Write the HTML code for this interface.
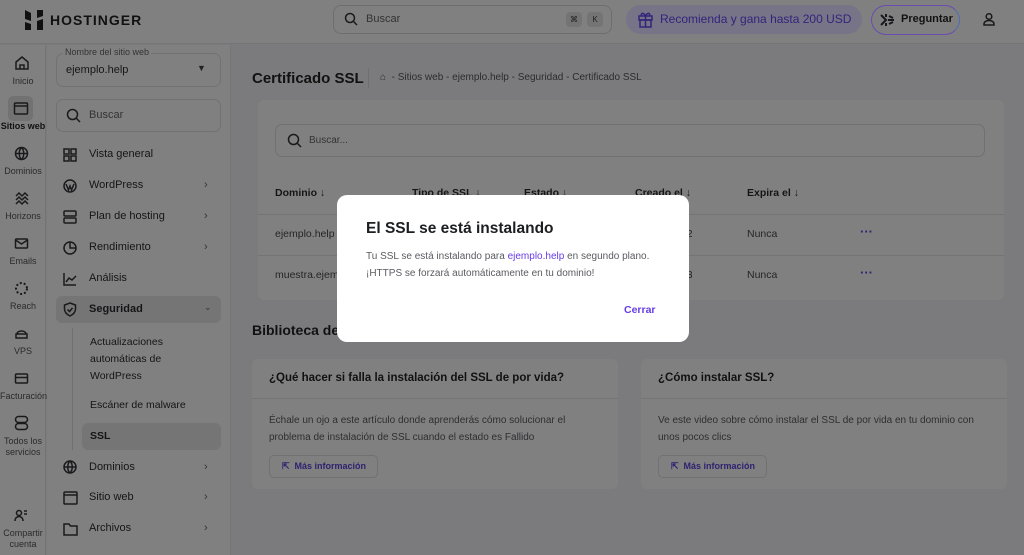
<!DOCTYPE html>
<html><head><meta charset="utf-8">
<style>
*{margin:0;padding:0;box-sizing:border-box}
body{width:1024px;height:555px;overflow:hidden;background:#7b7b7d;font-family:"Liberation Sans",sans-serif;color:#121214;position:relative}
.a{position:absolute}
.t{position:absolute;white-space:nowrap}
svg{position:absolute;fill:none;stroke:#1a1a1c;stroke-width:1.5}
.rail{font-size:9px;color:#2a2a2c;text-align:center;width:46px;left:0;line-height:11px}
.mi{position:absolute;left:89px;font-size:11px;color:#151517}
.chev{position:absolute;left:204px;font-size:11px;color:#333}
.th{position:absolute;top:187px;font-size:10.5px;font-weight:bold;color:#151517}
.td{position:absolute;font-size:10.5px;color:#252527}
</style></head><body>
<!-- header -->
<div class="a" style="left:0;top:0;width:1024px;height:44px;background:#808080;border-bottom:1px solid #757575"></div>
<svg style="left:24px;top:9px" width="20" height="22" viewBox="0 0 20 22"><path d="M1 1v9l6 2V4zM13 1v8l6-2V1zM1 13v8h6v-6zM13 12v9h6v-11z" fill="#111" stroke="none"/></svg>
<div class="t" style="left:50px;top:12px;font-size:14px;font-weight:bold;letter-spacing:1px;color:#111">HOSTINGER</div>
<div class="a" style="left:333px;top:5px;width:279px;height:29px;border:1px solid #6e6e6e;border-radius:8px"></div>
<svg style="left:344px;top:12px" width="14" height="14"><circle cx="6" cy="6" r="4.5"/><path d="M9.5 9.5l3.5 3.5"/></svg>
<div class="t" style="left:366px;top:13px;font-size:11px;color:#333">Buscar</div>
<div class="a" style="left:566px;top:12px;width:16px;height:15px;background:#747474;border-radius:4px;font-size:8px;text-align:center;line-height:15px;color:#222">⌘</div>
<div class="a" style="left:587px;top:12px;width:16px;height:15px;background:#747474;border-radius:4px;font-size:8px;text-align:center;line-height:15px;color:#222">K</div>
<div class="a" style="left:626px;top:5px;width:236px;height:29px;background:#777488;border-radius:15px"></div>
<svg style="left:637px;top:11px;stroke:#33247a" width="17" height="17"><rect x="2" y="5" width="13" height="4"/><rect x="3" y="9" width="11" height="7"/><path d="M8.5 5v11M8.5 5c-2-4-5-3-4 0M8.5 5c2-4 5-3 4 0"/></svg>
<div class="t" style="left:660px;top:12px;font-size:12px;color:#33247a">Recomienda y gana hasta 200 USD</div>
<div class="a" style="left:871px;top:5px;width:89px;height:30px;border:1.5px solid #6a4bb0;border-radius:15px;border-right-color:#4a6fb0"></div>
<svg style="left:880px;top:13px;stroke-width:2" width="14" height="14"><path d="M1 2l5 5-5 5M6 1v3M6 10v3M8 7h6M9 3l4 2M9 11l4-2"/></svg>
<div class="t" style="left:901px;top:13px;font-size:11px;font-weight:bold;color:#111">Preguntar</div>
<svg style="left:982px;top:12px" width="14" height="14"><circle cx="7" cy="4.5" r="2.8"/><path d="M2 13v-1c0-2 2-3.5 5-3.5s5 1.5 5 3.5v1z"/></svg>
<!-- rail -->
<div class="a" style="left:0;top:45px;width:46px;height:510px;background:#808080;border-right:1px solid #747474"></div>
<svg style="left:14px;top:55px" width="16" height="16"><path d="M2 7l6-5 6 5v7H2zM6 14v-4h4v4"/></svg>
<div class="t rail" style="top:76px">Inicio</div>
<div class="a" style="left:8px;top:96px;width:25px;height:25px;background:#727272;border-radius:5px"></div>
<svg style="left:13px;top:101px" width="16" height="16"><rect x="1.5" y="2" width="13" height="11" rx="1"/><path d="M1.5 5h13"/></svg>
<div class="t rail" style="top:121px;font-weight:bold;color:#111">Sitios web</div>
<svg style="left:14px;top:146px" width="15" height="15"><circle cx="7.5" cy="7.5" r="6"/><path d="M1.5 7.5h12M7.5 1.5c-3 3-3 9 0 12M7.5 1.5c3 3 3 9 0 12"/></svg>
<div class="t rail" style="top:166px">Dominios</div>
<svg style="left:14px;top:191px" width="15" height="15"><path d="M2 5l3-3 3 3 3-3 3 3M2 9l3-3 3 3 3-3 3 3M2 13l3-3 3 3 3-3 3 3"/></svg>
<div class="t rail" style="top:211px">Horizons</div>
<svg style="left:14px;top:236px" width="15" height="15"><rect x="1.5" y="3" width="12" height="9" rx="1"/><path d="M1.5 4l6 4 6-4"/></svg>
<div class="t rail" style="top:256px">Emails</div>
<svg style="left:14px;top:281px;stroke-width:2;stroke-dasharray:2 2" width="15" height="15"><circle cx="7.5" cy="7.5" r="5.5"/></svg>
<div class="t rail" style="top:301px">Reach</div>
<svg style="left:14px;top:326px" width="15" height="15"><path d="M3 8c0-4 9-4 9 0M2 8h11v4H2z"/></svg>
<div class="t rail" style="top:346px">VPS</div>
<svg style="left:14px;top:371px" width="15" height="15"><rect x="1.5" y="3" width="12" height="9" rx="1"/><path d="M1.5 6.5h12"/></svg>
<div class="t rail" style="top:391px">Facturación</div>
<svg style="left:14px;top:415px" width="15" height="17"><rect x="1.5" y="1.5" width="12" height="6" rx="3"/><rect x="1.5" y="8.5" width="12" height="6" rx="3"/></svg>
<div class="t rail" style="top:436px">Todos los<br>servicios</div>
<svg style="left:14px;top:508px" width="15" height="15"><circle cx="5" cy="5" r="2.5"/><path d="M1 13c0-3 2-4.5 4-4.5s4 1.5 4 4.5M10 3h3M10 6h3"/></svg>
<div class="t rail" style="top:528px">Compartir<br>cuenta</div>
<!-- sidebar -->
<div class="a" style="left:47px;top:45px;width:184px;height:510px;background:#808080;border-right:1px solid #747474"></div>
<div class="a" style="left:56px;top:53px;width:165px;height:34px;border:1px solid #727272;border-radius:7px"></div>
<div class="t" style="left:63px;top:47px;font-size:9px;color:#333;background:#808080;padding:0 2px">Nombre del sitio web</div>
<div class="t" style="left:66px;top:64px;font-size:11px;color:#161616">ejemplo.help</div>
<div class="t" style="left:197px;top:63px;font-size:9px;color:#222">▼</div>
<div class="a" style="left:56px;top:99px;width:165px;height:33px;border:1px solid #727272;border-radius:7px"></div>
<svg style="left:66px;top:108px" width="16" height="16"><circle cx="6.5" cy="6.5" r="5"/><path d="M10 10l4 4"/></svg>
<div class="t" style="left:89px;top:109px;font-size:11px;color:#333">Buscar</div>
<svg style="left:63px;top:148px" width="14" height="14"><rect x="1" y="1" width="5" height="5"/><rect x="8" y="1" width="5" height="5"/><rect x="1" y="8" width="5" height="5"/><rect x="8" y="8" width="5" height="5"/></svg>
<div class="mi" style="top:148px">Vista general</div>
<svg style="left:63px;top:179px" width="14" height="14"><circle cx="7" cy="7" r="6"/><path d="M3 5l2.5 6 1.5-4 1.5 4 2.5-6"/></svg>
<div class="mi" style="top:179px">WordPress</div><div class="chev" style="top:179px">›</div>
<svg style="left:63px;top:210px" width="14" height="14"><rect x="1" y="1" width="12" height="5" rx="1"/><rect x="1" y="8" width="12" height="5" rx="1"/></svg>
<div class="mi" style="top:210px">Plan de hosting</div><div class="chev" style="top:210px">›</div>
<svg style="left:63px;top:241px" width="14" height="14"><circle cx="7" cy="7" r="6"/><path d="M7 1v6h6"/></svg>
<div class="mi" style="top:241px">Rendimiento</div><div class="chev" style="top:241px">›</div>
<svg style="left:63px;top:272px" width="14" height="14"><path d="M1 1v12h12M3 10l3-4 3 2 4-4"/></svg>
<div class="mi" style="top:272px">Análisis</div>
<div class="a" style="left:56px;top:296px;width:165px;height:27px;background:#757575;border-radius:6px"></div>
<svg style="left:63px;top:302px" width="14" height="15"><path d="M7 1l5.5 2v4c0 3.5-2.5 5.5-5.5 7-3-1.5-5.5-3.5-5.5-7V3zM4.5 7.5l2 2 3-3.5"/></svg>
<div class="mi" style="top:303px;font-weight:bold">Seguridad</div><div class="chev" style="top:302px;font-size:9px">⌄</div>
<div class="a" style="left:72px;top:328px;width:1px;height:122px;background:#6f6f6f"></div>
<div class="mi" style="top:334px;left:90px;line-height:17px;font-size:10.5px;white-space:normal;width:120px">Actualizaciones automáticas de WordPress</div>
<div class="mi" style="top:399px;left:90px;font-size:10.5px">Escáner de malware</div>
<div class="a" style="left:82px;top:423px;width:139px;height:27px;background:#757575;border-radius:6px"></div>
<div class="mi" style="top:430px;left:90px;font-size:10.5px;font-weight:bold">SSL</div>
<svg style="left:63px;top:460px" width="14" height="14"><circle cx="7" cy="7" r="6"/><path d="M1 7h12M7 1c-3 3-3 9 0 12M7 1c3 3 3 9 0 12"/></svg>
<div class="mi" style="top:461px">Dominios</div><div class="chev" style="top:461px">›</div>
<svg style="left:63px;top:491px" width="15" height="14"><rect x="1" y="1" width="13" height="12" rx="1"/><path d="M1 4h13"/></svg>
<div class="mi" style="top:491px">Sitio web</div><div class="chev" style="top:491px">›</div>
<svg style="left:63px;top:522px" width="15" height="14"><path d="M1 2h5l1.5 2H14v9H1z"/></svg>
<div class="mi" style="top:522px">Archivos</div><div class="chev" style="top:522px">›</div>
<!-- main -->
<div class="t" style="left:252px;top:70px;font-size:15px;font-weight:bold;color:#111">Certificado SSL</div>
<div class="a" style="left:368px;top:68px;width:1px;height:20px;background:#6f6f6f"></div>
<div class="t" style="left:380px;top:72px;font-size:10px;color:#2c2c2e">⌂&nbsp; - Sitios web - ejemplo.help - Seguridad - Certificado SSL</div>
<div class="a" style="left:258px;top:100px;width:746px;height:200px;background:#808080;border-radius:6px"></div>
<div class="a" style="left:275px;top:124px;width:710px;height:33px;border:1px solid #707070;border-radius:7px"></div>
<svg style="left:287px;top:133px" width="16" height="16"><circle cx="6.5" cy="6.5" r="5"/><path d="M10 10l4 4"/></svg>
<div class="t" style="left:309px;top:135px;font-size:10px;color:#333">Buscar...</div>
<div class="th" style="left:275px">Dominio ↓</div>
<div class="th" style="left:412px">Tipo de SSL ↓</div>
<div class="th" style="left:524px">Estado ↓</div>
<div class="th" style="left:635px">Creado el ↓</div>
<div class="th" style="left:747px">Expira el ↓</div>
<div class="a" style="left:258px;top:214px;width:746px;height:1px;background:#747474"></div>
<div class="td" style="left:275px;top:228px">ejemplo.help</div>
<div class="td" style="left:640px;top:228px">12/12/2022</div>
<div class="td" style="left:747px;top:228px">Nunca</div>
<div class="td" style="left:860px;top:224px;color:#2e2270;font-weight:bold;font-size:13px">···</div>
<div class="a" style="left:258px;top:255px;width:746px;height:1px;background:#747474"></div>
<div class="td" style="left:275px;top:269px">muestra.ejemplo.help</div>
<div class="td" style="left:640px;top:269px">12/12/2023</div>
<div class="td" style="left:747px;top:269px">Nunca</div>
<div class="td" style="left:860px;top:265px;color:#2e2270;font-weight:bold;font-size:13px">···</div>
<div class="t" style="left:252px;top:322px;font-size:14px;font-weight:bold;color:#111">Biblioteca de conocimientos</div>
<div class="a" style="left:252px;top:359px;width:366px;height:130px;background:#808080;border-radius:6px"></div>
<div class="a" style="left:641px;top:359px;width:366px;height:130px;background:#808080;border-radius:6px"></div>
<div class="a" style="left:252px;top:398px;width:366px;height:1px;background:#747474"></div>
<div class="a" style="left:641px;top:398px;width:366px;height:1px;background:#747474"></div>
<div class="t" style="left:269px;top:372px;font-size:11.5px;font-weight:bold;color:#111">¿Qué hacer si falla la instalación del SSL de por vida?</div>
<div class="t" style="left:658px;top:372px;font-size:11.5px;font-weight:bold;color:#111">¿Cómo instalar SSL?</div>
<div class="t" style="left:269px;top:412px;font-size:10px;color:#2e2e30;line-height:17px">Échale un ojo a este artículo donde aprenderás cómo solucionar el<br>problema de instalación de SSL cuando el estado es Fallido</div>
<div class="t" style="left:658px;top:412px;font-size:10px;color:#2e2e30;line-height:17px">Ve este video sobre cómo instalar el SSL de por vida en tu dominio con<br>unos pocos clics</div>
<div class="a" style="left:269px;top:455px;width:109px;height:23px;border:1px solid #717171;border-radius:5px"></div>
<div class="a" style="left:658px;top:455px;width:109px;height:23px;border:1px solid #717171;border-radius:5px"></div>
<div class="t" style="left:282px;top:461px;font-size:9px;font-weight:bold;color:#2e2270">⇱&nbsp; Más información</div>
<div class="t" style="left:671px;top:461px;font-size:9px;font-weight:bold;color:#2e2270">⇱&nbsp; Más información</div>
<!-- modal -->
<div class="a" style="left:337px;top:195px;width:352px;height:147px;background:#fff;border-radius:10px"></div>
<div class="t" style="left:366px;top:220px;font-size:15.5px;font-weight:bold;color:#1d1e20">El SSL se está instalando</div>
<div class="t" style="left:366px;top:248px;font-size:10px;color:#5a5b60;line-height:17px">Tu SSL se está instalando para <span style="color:#673de6">ejemplo.help</span> en segundo plano.<br>¡HTTPS se forzará automáticamente en tu dominio!</div>
<div class="t" style="left:624px;top:304px;font-size:10.5px;font-weight:bold;color:#673de6">Cerrar</div>
</body></html>
